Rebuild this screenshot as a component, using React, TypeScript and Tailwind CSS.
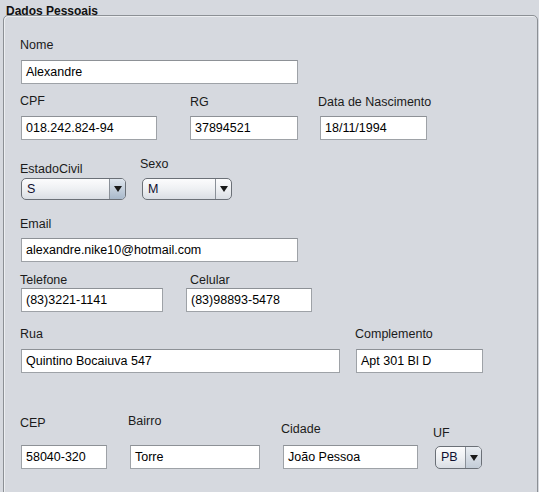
const font = { fontFamily: '"Liberation Sans", Arial, sans-serif' };

type FieldProps = {
  label: string;
  value: string;
  w: string;
  ml?: string;
  labelCls?: string;
};

const TextField = ({ label, value, w, ml = '', labelCls = '' }: FieldProps) => (
  <div className={`flex flex-col ${w} ${ml}`}>
    <span className={`whitespace-nowrap text-[12.5px] leading-[16px] text-[#1b1b1b] ${labelCls}`}>{label}</span>
    <div className="h-[24px] border border-[#9ea2a7] border-t-[#8d9196] bg-white pl-[4px] text-[12.5px] leading-[22px] text-black whitespace-nowrap overflow-hidden">
      {value}
    </div>
  </div>
);

const Arrow = () => (
  <svg width="8" height="6" viewBox="0 0 8 6">
    <polygon points="0,0 8,0 4,6" fill="#1a1a1a" />
  </svg>
);

type ComboProps = FieldProps & { h?: string; arrowCls?: string };

const Combo = ({ label, value, w, ml = '', labelCls = '', h = 'h-[22px]', arrowCls = '' }: ComboProps) => (
  <div className={`flex flex-col ${w} ${ml}`}>
    <span className={`whitespace-nowrap text-[12.5px] leading-[16px] text-[#1b1b1b] ${labelCls}`}>{label}</span>
    <div
      className={`${h} flex rounded-[5px] border border-[#6b7077] bg-gradient-to-b from-[#fcfcfd] via-[#eef0f3] to-[#dadee4] overflow-hidden`}
    >
      <span className="flex-1 pl-[5px] flex items-center text-[12.5px] text-[#101030]">{value}</span>
      <span className={`w-[16px] flex items-center justify-center border-l border-[#8a9098] ${arrowCls}`}>
        <Arrow />
      </span>
    </div>
  </div>
);

export default function App() {
  return (
    <div className="w-[539px] h-[492px] overflow-hidden bg-[#d6d9df]" style={font}>
      <div className="h-[15px] pt-[3px] pl-[6px] text-[12px] font-bold leading-[16px] text-[#111]">
        <div className="h-[12px]">Dados Pessoais</div>
      </div>
      <div className="ml-[3px] w-[535px] h-[490px] rounded-[5px] border border-[#8c9095] shadow-[inset_1px_1px_0_#eceef1] pl-[17px]">
        <div className="mt-[21px] flex items-end">
          <TextField label="Nome" value="Alexandre" w="w-[277px]" labelCls="mb-[7px] -ml-px" />
        </div>

        <div className="mt-[9px] flex items-end">
          <TextField label="CPF" value="018.242.824-94" w="w-[136px]" labelCls="mb-[7px] -ml-px" />
          <TextField label="RG" value="37894521" w="w-[108px]" ml="ml-[33px]" labelCls="mb-[6px]" />
          <TextField label="Data de Nascimento" value="18/11/1994" w="w-[107px]" ml="ml-[22px]" labelCls="mb-[6px] -ml-[2px]" />
        </div>

        <div className="mt-[16px] flex items-end">
          <Combo
            label="EstadoCivil"
            value="S"
            w="w-[105px]"
            labelCls="mb-[1px] -ml-[1px]"
            arrowCls="bg-gradient-to-b from-[#dfe6ee] to-[#a9b9cb]"
          />
          <Combo label="Sexo" value="M" w="w-[90px]" ml="ml-[16px]" labelCls="mb-[6px] -ml-[2px]" />
        </div>

        <div className="mt-[16px] flex items-end">
          <TextField label="Email" value="alexandre.nike10@hotmail.com" w="w-[277px]" labelCls="mb-[6px] -ml-px" />
        </div>

        <div className="mt-[10px] flex items-end">
          <TextField label="Telefone" value="(83)3221-1141" w="w-[142px]" labelCls="mb-0 -ml-px" />
          <TextField label="Celular" value="(83)98893-5478" w="w-[126px]" ml="ml-[23px]" labelCls="mb-0 ml-[4px]" />
        </div>

        <div className="mt-[14px] flex items-end">
          <TextField label="Rua" value="Quintino Bocaiuva 547" w="w-[319px]" labelCls="mb-[7px] -ml-px" />
          <TextField label="Complemento" value="Apt 301 Bl D" w="w-[127px]" ml="ml-[16px]" labelCls="mb-[7px] -ml-px" />
        </div>

        <div className="mt-[40px] flex items-end">
          <TextField label="CEP" value="58040-320" w="w-[86px]" labelCls="mb-[14px] -ml-px" />
          <TextField label="Bairro" value="Torre" w="w-[130px]" ml="ml-[23px]" labelCls="mb-[16px] -ml-[2px]" />
          <TextField label="Cidade" value="João Pessoa" w="w-[135px]" ml="ml-[23px]" labelCls="mb-[8px] -ml-[2px]" />
          <Combo
            label="UF"
            value="PB"
            w="w-[47px]"
            ml="ml-[17px]"
            h="h-[23px]"
            labelCls="mb-[5px] -ml-[2px]"
            arrowCls="bg-gradient-to-b from-[#e9edf2] to-[#c3ccd7]"
          />
        </div>
      </div>
    </div>
  );
}
